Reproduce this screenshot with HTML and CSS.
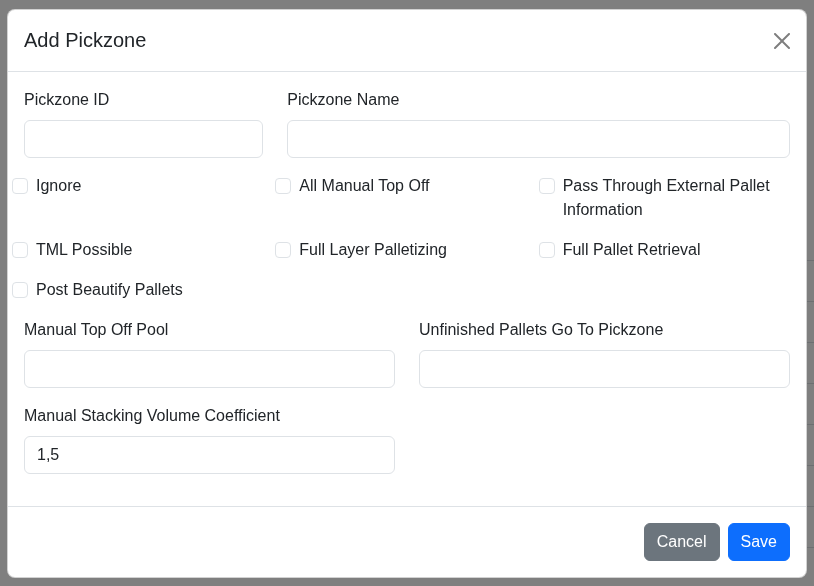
FILE: index.html
```html
<!DOCTYPE html>
<html lang="en">
<head>
<meta charset="utf-8">
<title>Add Pickzone</title>
<link rel="stylesheet" href="styles.css">
</head>
<body>
<div class="page">
  <div class="bg-table">
    <div class="bg-row"></div>
    <div class="bg-row"></div>
    <div class="bg-row"></div>
    <div class="bg-row"></div>
    <div class="bg-row"></div>
    <div class="bg-row"></div>
    <div class="bg-row"></div>
    <div class="bg-row"></div>
  </div>
</div>

<div class="modal">
  <div class="modal-header">
    <h5 class="modal-title">Add Pickzone</h5>
    <button class="btn-close" type="button" aria-label="Close">
      <svg viewBox="0 0 16 16" width="16" height="16"><path d="M.293.293a1 1 0 0 1 1.414 0L8 6.586 14.293.293a1 1 0 1 1 1.414 1.414L9.414 8l6.293 6.293a1 1 0 0 1-1.414 1.414L8 9.414l-6.293 6.293a1 1 0 0 1-1.414-1.414L6.586 8 .293 1.707a1 1 0 0 1 0-1.414z"/></svg>
    </button>
  </div>
  <div class="modal-body">
    <div class="row">
      <div class="col col-4">
        <label class="form-label">Pickzone ID</label>
        <input class="form-control" type="text" value="">
      </div>
      <div class="col col-8">
        <label class="form-label">Pickzone Name</label>
        <input class="form-control" type="text" value="">
      </div>
    </div>

    <div class="check-grid">
      <div class="form-check"><span class="check-box"></span><span class="check-label">Ignore</span></div>
      <div class="form-check"><span class="check-box"></span><span class="check-label">All Manual Top Off</span></div>
      <div class="form-check"><span class="check-box"></span><span class="check-label">Pass Through External Pallet Information</span></div>
      <div class="form-check"><span class="check-box"></span><span class="check-label">TML Possible</span></div>
      <div class="form-check"><span class="check-box"></span><span class="check-label">Full Layer Palletizing</span></div>
      <div class="form-check"><span class="check-box"></span><span class="check-label">Full Pallet Retrieval</span></div>
      <div class="form-check"><span class="check-box"></span><span class="check-label">Post Beautify Pallets</span></div>
    </div>

    <div class="row">
      <div class="col col-6">
        <label class="form-label">Manual Top Off Pool</label>
        <input class="form-control" type="text" value="">
      </div>
      <div class="col col-6">
        <label class="form-label">Unfinished Pallets Go To Pickzone</label>
        <input class="form-control" type="text" value="">
      </div>
    </div>

    <div class="row">
      <div class="col col-6">
        <label class="form-label">Manual Stacking Volume Coefficient</label>
        <input class="form-control" type="text" value="1,5">
      </div>
    </div>
  </div>
  <div class="modal-footer">
    <button class="btn btn-secondary" type="button">Cancel</button>
    <button class="btn btn-primary" type="button">Save</button>
  </div>
</div>
</body>
</html>
```

FILE: styles.css
```css
* { box-sizing: border-box; }

html, body {
  margin: 0;
  padding: 0;
  height: 100%;
}

body {
  background: #7f7f7f;
  font-family: "Liberation Sans", Arial, sans-serif;
  font-size: 16px;
  line-height: 24px;
  color: #212529;
  overflow: hidden;
}

.page {
  padding-top: 260px;
  padding-left: 12px;
}

.bg-row {
  height: 41px;
  border-top: 1px solid #6d6f71;
}

.modal {
  position: fixed;
  top: 9px;
  left: 7px;
  width: 800px;
  background: #fff;
  border: 1px solid rgba(0, 0, 0, 0.175);
  border-radius: 8px;
}

.modal-header {
  display: flex;
  align-items: center;
  padding: 16px;
  border-bottom: 1px solid #dee2e6;
  height: 62px;
}

.modal-title {
  margin: 0;
  font-size: 20px;
  font-weight: normal;
  line-height: 29px;
}

.btn-close {
  margin-left: auto;
  padding: 0;
  border: 0;
  background: transparent;
  width: 16px;
  height: 16px;
  display: flex;
  opacity: 0.5;
}

.btn-close svg {
  fill: #000;
}

.modal-body {
  padding: 16px;
}

.row {
  display: flex;
  margin: 0 -12px;
}

.col {
  padding: 0 12px;
  margin-bottom: 16px;
}

.col-4 { width: 33.3333%; }
.col-8 { width: 66.6667%; }
.col-6 { width: 50%; }

.form-label {
  display: block;
  margin-bottom: 8px;
}

.form-control {
  display: block;
  width: 100%;
  height: 38px;
  padding: 6px 12px;
  font-family: inherit;
  font-size: 16px;
  line-height: 24px;
  color: #212529;
  background: #fff;
  border: 1px solid #dee2e6;
  border-radius: 6px;
  outline: none;
}

.check-grid {
  display: grid;
  grid-template-columns: repeat(3, 1fr);
  margin: 0 -12px;
  row-gap: 16px;
  margin-bottom: 16px;
}

.form-check {
  display: flex;
  align-items: flex-start;
  padding-right: 24px;
}

.check-box {
  flex: none;
  width: 16px;
  height: 16px;
  margin-top: 4px;
  margin-right: 8px;
  border: 1px solid #dee2e6;
  border-radius: 4px;
  background: #fff;
}

.modal-footer {
  display: flex;
  justify-content: flex-end;
  align-items: center;
  padding: 12px;
  border-top: 1px solid #dee2e6;
}

.btn {
  margin: 4px;
  height: 38px;
  padding: 6px 12px;
  font-family: inherit;
  font-size: 16px;
  line-height: 24px;
  color: #fff;
  border: 1px solid transparent;
  border-radius: 6px;
}

.btn-secondary {
  background: #6c757d;
  border-color: #6c757d;
}

.btn-primary {
  background: #0d6efd;
  border-color: #0d6efd;
}
```
